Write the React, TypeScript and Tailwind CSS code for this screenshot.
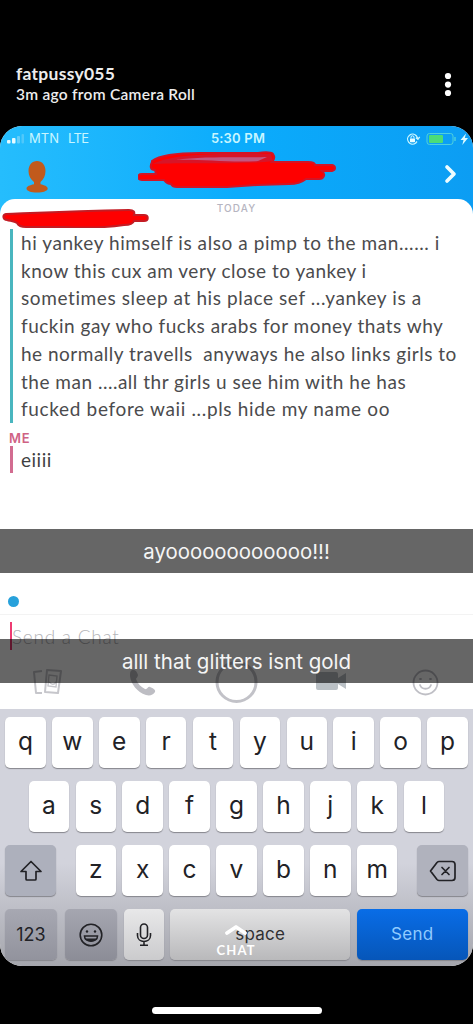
import type { ReactNode } from "react";

const messageLines = [
  { text: "hi yankey himself is also a pimp to the man...... i", tracking: "tracking-[0.57px]" },
  { text: "know this cux am very close to yankey i", tracking: "tracking-[0.5px]" },
  { text: "sometimes sleep at his place sef ...yankey is a", tracking: "tracking-[0.6px]" },
  { text: "fuckin gay who fucks arabs for money thats why", tracking: "tracking-[0.5px]" },
  { text: "he normally travells  anyways he also links girls to", tracking: "tracking-[0.5px]" },
  { text: "the man ....all thr girls u see him with he has", tracking: "tracking-[0.51px]" },
  { text: "fucked before waii ...pls hide my name oo", tracking: "tracking-[0.66px]" },
];

function Key({ children, className = "w-[40.6px] bg-white" }: { children?: ReactNode; className?: string }) {
  return (
    <div
      className={`flex h-[51px] shrink-0 items-center justify-center rounded-[5px] font-['Inter',sans-serif] text-[24.5px] text-[#222226] shadow-[0_1px_1px_#85858c] ${className}`}
    >
      {children}
    </div>
  );
}

function Letters({ letters }: { letters: string }) {
  return (
    <div className="flex gap-[6.3px]">
      {letters.split("").map((letter) => (
        <Key key={letter}>
          <span className="pb-[2px]">{letter}</span>
        </Key>
      ))}
    </div>
  );
}

function StoryHeader() {
  return (
    <header className="flex h-[126px] items-start justify-between pl-4 pr-5 pt-[64px] font-['Lato',sans-serif] text-[#ededed]">
      <div>
        <div className="whitespace-nowrap text-[17.5px] font-bold leading-[20px] tracking-[0.27px]">fatpussy055</div>
        <div className="whitespace-nowrap text-[15.5px] font-semibold leading-[20px] tracking-[0.27px]">3m ago from Camera Roll</div>
      </div>
      <svg className="mt-[8px]" width="10" height="26" viewBox="0 0 10 26" fill="#fff">
        <circle cx="5" cy="4" r="3.1" />
        <circle cx="5" cy="12.6" r="3.1" />
        <circle cx="5" cy="21" r="3.1" />
      </svg>
    </header>
  );
}

function StatusBar() {
  return (
    <div className="grid h-[25px] grid-cols-[1fr_auto_1fr] items-center pl-[6px] pr-[3px] font-['Inter',sans-serif] text-[#c8f6ff]">
      <div className="flex items-center text-[13px]">
        <svg width="20" height="12" viewBox="0 0 20 12">
          <rect x="1" y="7" width="3.5" height="3.5" rx="1" fill="#e6faff" />
          <rect x="6" y="5" width="3.5" height="5.5" rx="1" fill="#e6faff" />
          <rect x="11" y="3" width="3" height="7.5" rx="1" fill="#64cefb" />
          <rect x="15.5" y="1" width="2.5" height="9.5" rx="1" fill="#50c8fa" />
        </svg>
        <span className="ml-[3px]">MTN</span>
        <span className="ml-[9px] tracking-[-0.6px]">LTE</span>
      </div>
      <div className="text-[13px] font-semibold tracking-[0.2px]">5:30 PM</div>
      <div className="flex items-center justify-end">
        <svg width="64" height="16" viewBox="-4 0 64 16" fill="none">
          <g transform="translate(-4 0)">
            <path d="M9.5 12.2A5 5 0 1 1 10.5 5l1.2 2.4M13.7 5.8l-1.8 2.5-2-1.5M9.5 12.2l1.5-1.7" stroke="#c8f6ff" strokeWidth="1.3" />
            <rect x="4" y="7.4" width="5" height="3.8" rx=".6" fill="#e8fcff" />
            <path d="M5 7.5V6.3a1.5 1.5 0 0 1 3 0v1.2" stroke="#e8fcff" />
          </g>
          <rect x="17" y="2.5" width="26" height="11" rx="2.5" stroke="#4fd0dd" />
          <rect x="19" y="4" width="14" height="8" rx="1" fill="#4bdc78" />
          <path d="M45 6v4" stroke="#4fd0dd" strokeWidth="1.4" />
          <path d="M56 2.5 50.5 9h3l-1.2 5L58 7h-3.2z" fill="#dcfbff" />
        </svg>
      </div>
    </div>
  );
}

function ChatHeader() {
  return (
    <div className="relative h-[88px] bg-linear-to-r from-[#25bdfd] via-[#0bacfc] to-[#0c9df3]">
      <StatusBar />
      <div className="flex items-start justify-between pl-[26px] pr-[15px]">
        <svg className="mt-[9px]" width="23" height="34" viewBox="0 0 23 34" fill="#c15a1c">
          <path d="M11 1C6 1 2.5 5 2.5 11c0 4.5 2 8.5 5.5 11v2.2C4 25 .5 26.3 .5 28.5 .5 31 5 32.5 11 32.5s10.700-1.500 10.700-4c0-2.200-3.500-3.500-7.200-4.300V22c3.200-2.500 5-6.500 5-11C19.500 5 16 1 11 1z" />
        </svg>
        <svg className="mt-[13px]" width="14" height="20" viewBox="0 0 14 20" fill="none" stroke="#effdff" strokeWidth="3.7">
          <path d="m3 3 7 7-7 7" strokeLinecap="round" strokeLinejoin="round" />
        </svg>
      </div>
      <svg className="absolute left-[138px] top-[24px]" width="206" height="40" viewBox="0 0 206 40">
        <path
          d="M14 11C22 5 41 3 62 3h58c7-1 13-1 15 1 2 3 1 6-1 8h36c4 0 7 1 7 3h17c4 1 4 5 0 6h-10c4 3 2 8-3 8h-13c-5 4-11 5-17 5l-32 1-30 2H39c-4 0-5-1-6-3-5 0-6-3-7-4H4c-5 0-5-6 0-6h14l-1-4c-5 0-5-4-3-8z"
          fill="#fe0000"
          stroke="#d31426"
          strokeWidth="2"
        />
        <path d="M15 14C30 6 60 4 94 4h39l2 7c-25 4-90 1-120 3z" fill="#d81427" />
        <path d="M38 10c25-4 68-2 91-3l-9 4C95 13 60 9 38 10z" fill="#c35780" />
      </svg>
    </div>
  );
}

function Conversation() {
  return (
    <section className="relative -mt-[15px] h-[330px] rounded-t-[15px] bg-white font-['Lato',sans-serif]">
      <div className="flex h-[30px] justify-center pt-[2px] font-['Inter',sans-serif] text-[10px] font-medium tracking-[1.1px] text-[#b6b5c1]">TODAY</div>
      <svg className="absolute left-[2px] top-[9px]" width="148" height="20" viewBox="0 0 148 20">
        <path
          d="M4 6C30 5 70 3 127 2c5 0 6 2 5 5h10c5 0 5 6 0 6h-10c-1 3-5 4-10 4-20 3-40 3-60 2H24c-6 0-8-2-9-4-3-2-7-2-10-3-4 0-5-5-1-6z"
          fill="#fe0000"
          stroke="#c41c24"
          strokeWidth="2"
        />
      </svg>
      <div className="ml-[10px] h-[194px] border-l-[3px] border-[#49b6bf] pl-[8px] text-[19px] leading-[27.7px] text-[#4b4b4d]">
        {messageLines.map((line) => (
          <div key={line.text} className={`whitespace-pre ${line.tracking}`}>
            <span>{line.text}</span>
          </div>
        ))}
      </div>
      <div className="ml-[9px] mt-[7px] font-['Inter',sans-serif] text-[13px] font-semibold leading-[16px] tracking-[0.7px] text-[#cf6284]">ME</div>
      <div className="ml-[10px] h-[27px] border-l-[3px] border-[#d26c90] pl-[8px] text-[19px] leading-[27px] tracking-[0.5px] text-[#3f3f42]">eiiii</div>
    </section>
  );
}

function Composer() {
  return (
    <section className="flex h-[180px] flex-col bg-white">
      <div className="flex h-[86px] items-end border-b border-[#f3f3f3] pb-[7px] pl-[8px]">
        <div className="size-[11px] rounded-full bg-[#27a1db]" />
      </div>
      <div className="ml-[10px] mt-[7px] flex h-[28px] items-start border-l-2 border-[#ee3b72] font-['Lato',sans-serif] text-[19px] font-light leading-[30px] tracking-[0.75px] text-[#b4b4b8]">
        Send a Chat
      </div>
      <div className="mt-[11px] flex items-center pl-[32px]">
        <svg width="31" height="26" viewBox="0 0 31 26" fill="none" stroke="#c6c6cb" strokeWidth="2">
          <path d="M10 2 2 3l2 21h6M15 1l14 1-3 22-13-1z" strokeLinejoin="round" />
          <path d="m17 6 8 1-1 11-8-1zM17 13c3 3 5 3 7 0" strokeWidth="1.4" />
        </svg>
        <svg className="ml-[67px]" width="26" height="27" viewBox="0 0 26 27" fill="#bdbdc3">
          <path d="M2 1c3-1 5 2 6 5 0 2-2 3-2 4 2 5 5 8 9 10 2 1 3-3 5-2 3 1 6 3 5 5-2 3-5 4-9 3C7 23 1 15 0 7c0-3 0-5 2-6z" />
        </svg>
        <svg className="ml-[58px]" width="44" height="42" viewBox="0 0 44 42" fill="none" stroke="#c2c2c8" strokeWidth="3">
          <circle cx="22.5" cy="21" r="19.5" />
        </svg>
        <svg className="ml-[58px]" width="31" height="22" viewBox="0 0 31 22" fill="#bbc1c6">
          <path d="M2 1h18q2 0 2 2v4l8-5v16l-8-5v4q0 2-2 2H2q-2 0-2-2V3q0-2 2-2z" />
        </svg>
        <svg className="ml-[65px]" width="27" height="27" viewBox="0 0 27 27" fill="none" stroke="#bfbfc5" strokeWidth="1.8">
          <circle cx="13.5" cy="13.5" r="12" />
          <path d="M8 16c2 5 9 5 11 0M8 10h1M18 10h1" strokeLinecap="round" />
        </svg>
      </div>
    </section>
  );
}

function Keyboard() {
  return (
    <section className="flex h-[257px] flex-col items-center gap-[13px] bg-linear-to-b from-[#d2d3dc] from-60% to-[#a5a6ad] px-[5px] pt-[8px]">
      <Letters letters="qwertyuiop" />
      <Letters letters="asdfghjkl" />
      <div className="flex w-full justify-between">
        <Key className="w-[51px] bg-[#adb0bc]">
          <svg width="24" height="22" viewBox="0 0 24 22" fill="none" stroke="#222226" strokeWidth="1.7" strokeLinejoin="round">
            <path d="m12 1.500 10 10h-5v7.500q0 1-1 1H8q-1 0-1-1v-7.500H2z" />
          </svg>
        </Key>
        <Letters letters="zxcvbnm" />
        <Key className="w-[51px] bg-[#b0b2bd]">
          <svg width="28" height="22" viewBox="0 0 28 22" fill="none" stroke="#222226" strokeWidth="1.7" strokeLinejoin="round" strokeLinecap="round">
            <path d="M10 1.500h13q3 0 3 3v13q0 3-3 3H10q-1 0-2-1L1.500 11 8 2.500q1-1 2-1zM13 7.500l7 7M20 7.500l-7 7" />
          </svg>
        </Key>
      </div>
      <div className="flex w-full gap-[6.6px]">
        <Key className="mr-[1.4px] w-[52px] bg-linear-to-b from-[#a7a8b2] to-[#92939d]">
          <span className="text-[18px]">123</span>
        </Key>
        <Key className="w-[52px] bg-linear-to-b from-[#a5a6b0] to-[#8c8d97]">
          <svg width="24" height="24" viewBox="0 0 24 24" fill="none" stroke="#222226" strokeWidth="1.6">
            <circle cx="12" cy="12" r="10.8" />
            <path d="M5.500 13h13c0 7-13 7-13 0z" />
            <path d="M6 15.500h12c-2 4-10 4-12 0z" fill="#222226" stroke="none" />
            <circle cx="8" cy="8.5" r="1.2" fill="#222226" stroke="none" />
            <circle cx="16" cy="8.5" r="1.2" fill="#222226" stroke="none" />
          </svg>
        </Key>
        <Key className="w-[40px] bg-linear-to-b from-[#e8e8e9] to-[#cbcbcd]">
          <svg width="16" height="24" viewBox="0 0 16 24" fill="none" stroke="#222226" strokeWidth="1.6">
            <rect x="4.5" y="1" width="7" height="14.5" rx="3.5" />
            <path d="M1.500 10v2.500c0 8 13 8 13 0V10M8 18.500V22M4 22.200h8" />
          </svg>
        </Key>
        <Key className="relative w-[180px] bg-linear-to-b from-[#e3e3e4] to-[#b9b9bb]">
          <span className="text-[17px] tracking-[0.2px] text-[#303033]">space</span>
          <div className="absolute left-[46px] top-[15px] flex w-[40px] flex-col items-center font-['Lato',sans-serif] text-[13px] font-bold leading-[14px] tracking-[1.2px] text-white">
            <svg width="24" height="11" viewBox="0 0 24 11" fill="none" stroke="#fff" strokeWidth="3.8">
              <path d="m3 9 9-6 9 6" strokeLinecap="round" strokeLinejoin="round" />
            </svg>
            <span className="mt-[8px]">CHAT</span>
          </div>
        </Key>
        <Key className="w-[111px] bg-linear-to-b from-[#096de7] to-[#0656b9]">
          <span className="text-[17px] tracking-[0.3px] text-[#91cbff]">Send</span>
        </Key>
      </div>
    </section>
  );
}

function Caption({ children, className }: { children: ReactNode; className: string }) {
  return (
    <div className={`absolute inset-x-0 flex h-[44px] items-center justify-center whitespace-pre bg-black/60 pt-[2px] font-['Inter',sans-serif] text-[#f5f5f5] ${className}`}>
      <span>{children}</span>
    </div>
  );
}

export default function App() {
  return (
    <main className="h-[1024px] w-[473px] overflow-hidden bg-black">
      <StoryHeader />
      <div className="relative h-[840px] overflow-hidden rounded-[22px] bg-white">
        <ChatHeader />
        <Conversation />
        <Composer />
        <Keyboard />
        <Caption className="top-[403px] text-[20.4px]">ayoooooooooooo!!!</Caption>
        <Caption className="top-[513px] text-[20.5px]">alll that glitters isnt gold</Caption>
      </div>
      <div className="mx-auto mt-[41px] h-[7px] w-[170px] rounded-full bg-white" />
    </main>
  );
}
